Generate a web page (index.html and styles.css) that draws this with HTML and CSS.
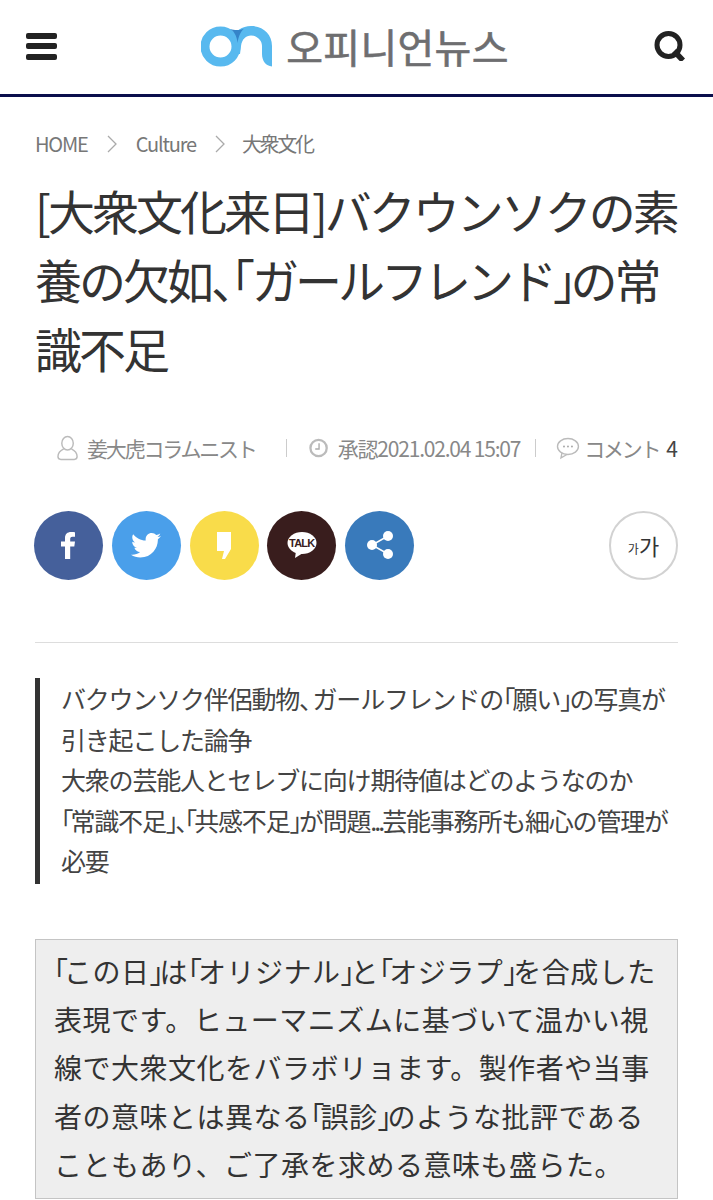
FILE: index.html
```html
<!DOCTYPE html>
<html lang="ja">
<head>
    <meta charset="UTF-8">
    <meta name="viewport" content="width=device-width, initial-scale=1.0">
    <title>オピニオンニュース</title>
    <link rel="stylesheet" href="styles.css">
</head>
<body>
    <header class="top-bar">
        <div class="menu-icon"><span></span><span></span><span></span></div>
        <a class="logo" href="#">
            <svg class="logo-mark" width="71" height="41" viewBox="0 0 71 41">
                <circle cx="19.500" cy="20.500" r="15.500" fill="none" stroke="#58b9ef" stroke-width="9"/>
                <path d="M31 12 C34 5 41 0 50 0 C62 0 71 8 71 20 L71 40.500 C65 40 61 35 61 28 L61 20 C61 14 56 9.500 50 9.500 C45 9.500 41 13 40 20 L39 28 L33 28 Z" fill="#58b9ef"/>
                <path d="M29 3 C33 5 36 10 36.500 17 C37.500 11 39 6.500 43 2.500 C40 4 35 5 29 3 Z" fill="#3584c9"/>
            </svg>
            <span class="logo-text">오피니언뉴스</span>
        </a>
        <svg class="search-icon" width="33" height="30" viewBox="0 0 33 30">
            <circle cx="15.500" cy="14" r="11.500" fill="none" stroke="#222" stroke-width="5"/>
            <path d="M21 20 L30 29.500" stroke="#222" stroke-width="5.500"/>
        </svg>
    </header>

    <main class="article">
        <nav class="crumbs">
            <span>HOME</span>
            <svg class="crumb-arrow" width="10" height="18" viewBox="0 0 10 18"><path d="M1 1 L9 9 L1 17" fill="none" stroke="#aaa" stroke-width="1.300"/></svg>
            <span>Culture</span>
            <svg class="crumb-arrow" width="10" height="18" viewBox="0 0 10 18"><path d="M1 1 L9 9 L1 17" fill="none" stroke="#aaa" stroke-width="1.300"/></svg>
            <span class="crumb-last">大衆文化</span>
        </nav>

        <h1 class="headline">[大衆文化来日]バクウンソクの素<br>養の欠如<span class="hw comma">、「</span><span class="kana">ガールフレンド</span><span class="hw">」</span>の常<br>識不足</h1>

        <div class="meta">
            <svg class="meta-user" width="22" height="26" viewBox="0 0 22 26"><ellipse cx="11" cy="8" rx="6" ry="7" fill="none" stroke="#bbb" stroke-width="1.500"/><path d="M7 14 C3 16 1 19 1 22 C1 24 2 25 4 25 L18 25 C20 25 21 24 21 22 C21 19 19 16 15 14" fill="none" stroke="#bbb" stroke-width="1.500"/></svg>
            <span class="meta-name">姜大虎コラムニスト</span>
            <i class="meta-sep"></i>
            <svg class="meta-clock" width="20" height="20" viewBox="0 0 20 20"><circle cx="10" cy="10" r="8.500" fill="none" stroke="#bbb" stroke-width="2.400"/><path d="M10.500 5 V11 H6.500" fill="none" stroke="#aaa" stroke-width="1.400"/></svg>
            <span class="meta-date">承認2021.02.04 15:07</span>
            <i class="meta-sep"></i>
            <svg class="meta-bubble" width="25" height="24" viewBox="0 0 24 22"><ellipse cx="12" cy="9.500" rx="10.500" ry="8" fill="none" stroke="#bbb" stroke-width="1.400"/><path d="M6 16 L5 21 L11 17.500" fill="none" stroke="#bbb" stroke-width="1.400"/><circle cx="8" cy="9.500" r="1" fill="#aaa"/><circle cx="12" cy="9.500" r="1" fill="#aaa"/><circle cx="16" cy="9.500" r="1" fill="#aaa"/></svg>
            <span class="meta-comment">コメント<b>4</b></span>
        </div>

        <div class="share-row">
            <a class="share share-fb" href="#"><svg width="20" height="28" viewBox="0 0 20 28"><path d="M6 28 V15.500 H2 V10.500 H6 V7 C6 3 8.500 1 12 1 C14 1 15.500 1.200 16 1.300 V5.800 H13.500 C11.500 5.800 11.200 6.800 11.200 8.200 V10.500 H16 L15.300 15.500 H11.200 V28 Z" fill="#fff"/></svg></a>
            <a class="share share-tw" href="#"><svg width="30" height="25" viewBox="0 0 24 20"><path d="M24 2.400 C23.100 2.800 22.200 3.100 21.200 3.200 C22.200 2.600 23 1.600 23.400 .4 C22.400 1 21.400 1.400 20.200 1.600 C19.300 .6 18 0 16.600 0 C13.900 0 11.700 2.200 11.700 4.900 C11.700 5.300 11.700 5.700 11.800 6 C7.700 5.800 4.100 3.800 1.700 .9 C1.200 1.600 1 2.500 1 3.400 C1 5.100 1.900 6.600 3.200 7.500 C2.400 7.500 1.600 7.200 1 6.900 C1 9.300 2.700 11.300 4.900 11.700 C4.200 11.900 3.400 11.900 2.700 11.800 C3.300 13.800 5.200 15.200 7.300 15.200 C5.300 16.800 2.600 17.600 0 17.300 C2.200 18.700 4.800 19.500 7.500 19.500 C16.600 19.500 21.500 12 21.500 5.500 C21.500 5.300 21.500 5.100 21.500 4.900 C22.500 4.200 23.300 3.400 24 2.400 Z" fill="#fff"/></svg></a>
            <a class="share share-story" href="#"><svg width="14" height="27" viewBox="0 0 14 27"><path d="M0 0 H14 V17 L8 27 H5 L7 19 H0 Z" fill="#fff"/></svg></a>
            <a class="share share-talk" href="#"><svg width="30" height="26" viewBox="0 0 30 26"><ellipse cx="15" cy="11" rx="14.500" ry="11" fill="#fff"/><path d="M9 19 L8 26 L16 21" fill="#fff"/></svg><span class="talk-text">TALK</span></a>
            <a class="share share-link" href="#"><svg width="28" height="30" viewBox="0 0 28 30"><path d="M22 6 L6 15 L22 24" fill="none" stroke="#fff" stroke-width="1.500"/><circle cx="22" cy="6" r="5" fill="#fff"/><circle cx="6" cy="15" r="5" fill="#fff"/><circle cx="22" cy="24" r="5" fill="#fff"/></svg></a>
            <a class="font-size" href="#"><small>가</small>가</a>
        </div>

        <hr class="rule">

        <blockquote class="summary">
            <p>バクウンソク伴侶動物<span class="hw comma">、</span>ガールフレンドの<span class="hw">「</span>願い<span class="hw">」</span>の写真が<br>引き起こした論争</p>
            <p>大衆の芸能人とセレブに向け期待値はどのようなのか</p>
            <p><span class="hw">「</span>常識不足<span class="hw">」、「</span>共感不足<span class="hw">」</span>が問題<span class="hw">...</span>芸能事務所も細心の管理が<br>必要</p>
        </blockquote>

        <div class="notice"><span class="hw">「</span>この日<span class="hw">」</span>は<span class="hw">「</span>オリジナル<span class="hw">」</span>と<span class="hw">「</span>オジラプ<span class="hw">」</span>を合成した<br>表現です。ヒューマニズムに基づいて温かい視<br>線で大衆文化をバラボリョます。製作者や当事<br>者の意味とは異なる<span class="hw">「</span>誤診<span class="hw">」</span>のような批評である<br>こともあり、ご了承を求める意味も盛らた。</div>
    </main>
</body>
</html>
```

FILE: styles.css
```css
* {
    margin: 0;
    padding: 0;
    box-sizing: border-box;
}

html, body {
    height: 1200px;
    overflow: hidden;
}

body {
    background-color: #fff;
    font-family: "Noto Sans CJK JP", "Noto Sans", sans-serif;
    color: #333;
}

a {
    text-decoration: none;
    color: inherit;
}

/* half width brackets and commas, the font on the real site sets them tight */
.hw {
    font-feature-settings: "halt";
}

.top-bar {
    height: 97px;
    border-bottom: 3px solid #0a0f4c;
    display: flex;
    align-items: center;
    justify-content: space-between;
    padding: 0 27px 2px 26px;
}

.menu-icon {
    width: 31px;
    display: flex;
    flex-direction: column;
    gap: 4.500px;
}

.menu-icon span {
    height: 6px;
    border-radius: 2px;
    background-color: #222;
}

.logo {
    display: flex;
    align-items: center;
    gap: 14px;
}

.logo-text {
    font-family: "Noto Sans CJK KR", sans-serif;
    font-size: 40px;
    line-height: 46px;
    letter-spacing: .3px;
    color: #6e6e70;
    -webkit-text-stroke: .6px #6e6e70;
}

.article {
    padding: 0 35px;
}

.crumbs {
    margin-top: 33px;
    display: flex;
    align-items: center;
    font-size: 20px;
    line-height: 28px;
    letter-spacing: -1.200px;
    color: #777;
}

.crumb-arrow {
    margin: 0 19px;
}

.crumb-last {
    margin-left: -2px;
    letter-spacing: -2.300px;
}

.headline {
    margin-top: 17px;
    font-size: 47px;
    line-height: 69px;
    font-weight: 400;
    letter-spacing: -3px;
    color: #333;
    white-space: nowrap;
}

.headline .hw {
    letter-spacing: -6px;
}

.headline .comma {
    letter-spacing: -3px;
}

.headline .kana {
    letter-spacing: -4px;
}

.meta {
    margin-top: 51px;
    display: flex;
    align-items: center;
    font-size: 21px;
    line-height: 30px;
    letter-spacing: -2.200px;
    color: #888;
    padding-left: 22px;
    white-space: nowrap;
}

.meta-name {
    margin-left: 9px;
}

.meta-sep {
    width: 1px;
    height: 18px;
    background-color: #ccc;
    margin: 0 22px 0 30px;
}

.meta-clock {
    margin-right: 10px;
}

.meta-date {
    letter-spacing: -1.200px;
}

.meta-date + .meta-sep {
    margin: 0 20px 0 15px;
}

.meta-comment {
    margin-left: 4px;
}

.meta-comment b {
    font-weight: 400;
    color: #444;
    margin-left: 7px;
    letter-spacing: 0;
}

.share-row {
    margin: 47.500px 0 0 -1px;
    display: flex;
    gap: 8.750px;
    align-items: center;
}

.share {
    position: relative;
    width: 69px;
    height: 69px;
    border-radius: 50%;
    display: flex;
    align-items: center;
    justify-content: center;
}

.share-fb { background-color: #45609b; }
.share-tw { background-color: #4a9fea; }
.share-story { background-color: #f9dc4a; }
.share-talk { background-color: #391d1d; }
.share-link { background-color: #397abb; }

.talk-text {
    position: absolute;
    left: 0;
    right: 0;
    top: 25px;
    text-align: center;
    font-family: "Liberation Sans", sans-serif;
    font-size: 11px;
    font-weight: 700;
    letter-spacing: -.8px;
    line-height: 14px;
    color: #391d1d;
}

.font-size {
    margin-left: auto;
    width: 69px;
    height: 69px;
    border: 2px solid #d2d2d2;
    border-radius: 50%;
    display: flex;
    align-items: center;
    justify-content: center;
    font-family: "Noto Sans CJK KR", sans-serif;
    font-size: 22px;
    color: #333;
}

.font-size small {
    font-size: 12px;
    margin-top: 6px;
}

.rule {
    margin-top: 62.500px;
    border: none;
    border-top: 1px solid #ddd;
}

.summary {
    margin-top: 35px;
    border-left: 5px solid #333;
    padding: 0 0 3px 21px;
    font-size: 25px;
    line-height: 40.600px;
    letter-spacing: -1.200px;
    color: #444;
    white-space: nowrap;
}

.summary .hw {
    letter-spacing: -3px;
}

.summary .comma {
    letter-spacing: 1px;
}

.notice {
    margin-top: 55px;
    background-color: #eee;
    border: 1px solid #c4c4c4;
    padding: 7px 17px 10px 18px;
    font-size: 28px;
    line-height: 48.200px;
    letter-spacing: .5px;
    color: #333;
    white-space: nowrap;
}

.notice .hw {
    letter-spacing: -4px;
}
```
